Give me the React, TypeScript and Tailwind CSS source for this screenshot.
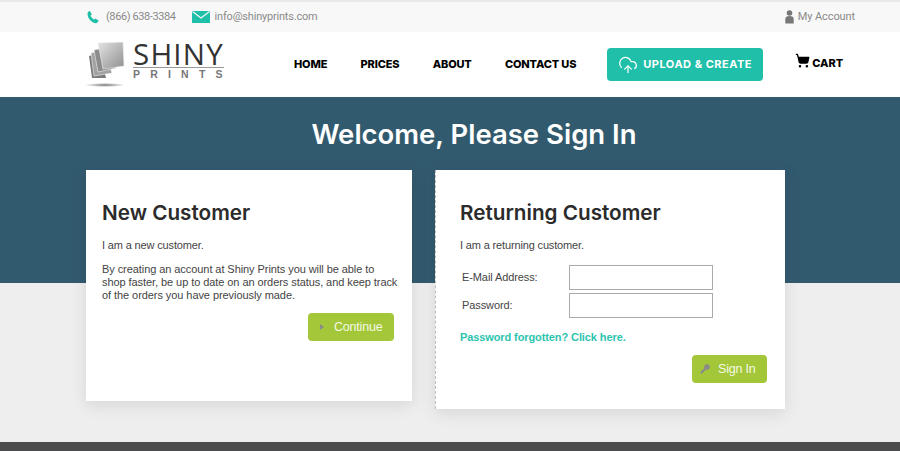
import { CloudUpload, ShoppingCart } from "lucide-react";

const navItems = ["HOME", "PRICES", "ABOUT", "CONTACT US"];

const Logo = () => {
  return (
    <div className="flex w-[138px] items-start">
      <svg width="42" height="46" viewBox="0 0 42 46" className="mt-[10px]">
        <defs>
          <linearGradient id="sheet" x1="0" y1="0" x2="1" y2="1">
            <stop offset="0" stopColor="#e4e4e4" />
            <stop offset="1" stopColor="#8f8f8f" />
          </linearGradient>
          <radialGradient id="shade">
            <stop offset="0" stopColor="#777" />
            <stop offset="1" stopColor="#fff" />
          </radialGradient>
        </defs>
        <polygon points="3,14 14,11 20,36 6,36" fill="#7c7c7c" />
        <polygon points="5,11 18,8 26,31 8,34" fill="#a2a2a2" stroke="#eee" strokeWidth="0.6" />
        <polygon points="8,8 22,5 30,26 12,30" fill="#8c8c8c" stroke="#eee" strokeWidth="0.6" />
        <polygon points="12,1 37,0 38,24 17,27" fill="url(#sheet)" stroke="#eee" strokeWidth="0.6" />
        <ellipse cx="19" cy="43" rx="20" ry="2" fill="url(#shade)" />
      </svg>
      <div className="ml-[5px] mt-[8px] flex w-[91px] flex-col">
        <div className="font-['Open_Sans',sans-serif] text-[29.5px] leading-[27px] tracking-[1.2px] text-[#333333]">
          SHINY
        </div>
        <div className="h-px w-[91px] bg-[#9a9a9a]" />
        <div className="mt-[1px] font-['Liberation_Sans',sans-serif] text-[10.5px] leading-[11px] font-bold tracking-[10.2px] whitespace-nowrap text-[#777777]">
          PRINTS
        </div>
      </div>
    </div>
  );
};

const App = () => {
  return (
    <div className="h-[451px] w-[900px] overflow-hidden bg-[#eeeeee] font-['Liberation_Sans',sans-serif]">
      {/* top bar */}
      <div className="h-[32px] border-t-2 border-[#e9e9e9] bg-[#f8f8f8]">
        <div className="flex h-full items-center pl-[86px] pr-[45px] font-['Roboto',sans-serif] text-[11px] text-[#8a8a8a]">
          <svg width="14" height="14" viewBox="0 0 24 24" fill="#1fbfa9">
            <path d="M6.600 1.500 10 7.200 7.900 9.600c.9 2.800 3.200 5.400 5.900 6.800l2.300-2 5.500 3.600c-.7 2.500-2.400 4.400-4.500 4.500C9.800 22.600 2 13.600 2.700 5.500 2.900 3.600 4.400 2 6.600 1.500Z" />
          </svg>
          <span className="ml-[6px] tracking-[-0.4px]">(866) 638-3384</span>
          <svg width="18" height="12" viewBox="0 0 18 12" className="ml-[16px]">
            <rect width="18" height="12" fill="#1fbfa9" />
            <path d="M0.5 0.5 9 7l8.500-6.500" fill="none" stroke="#f8f8f8" strokeWidth="1.2" />
          </svg>
          <span className="ml-[5px] tracking-[-0.2px]">info@shinyprints.com</span>
          <svg width="9" height="14" viewBox="0 0 9 14" fill="#777777" className="ml-auto">
            <circle cx="4.5" cy="3" r="2.8" />
            <path d="M0.3 13.5V9c0-2 1.500-3 4.200-3s4.200 1 4.200 3v4.500Z" />
          </svg>
          <span className="ml-[4px] tracking-[-0.1px]">My Account</span>
        </div>
      </div>

      {/* header */}
      <div className="flex h-[65px] items-start bg-white pl-[86px]">
        <Logo />
        <nav className="ml-[70px] flex h-full items-center gap-[33.3px] font-['Inter',sans-serif] text-[11px] font-extrabold tracking-[-0.15px] text-black">
          {navItems.map((item) => (
            <span key={item}>{item}</span>
          ))}
        </nav>
        <div className="mt-[16px] ml-[31px] flex h-[33px] w-[156px] items-center rounded-[4px] bg-[#1fbfa9] pl-[11px] text-white">
          <CloudUpload size={20} strokeWidth={1.5} />
          <span className="ml-[5px] font-['Inter',sans-serif] text-[11px] font-bold tracking-[0.5px]">
            UPLOAD &amp; CREATE
          </span>
        </div>
        <div className="mt-[21px] ml-[32px] flex items-start">
          <ShoppingCart size={15} fill="#000" className="text-black" />
          <span className="mt-[4px] ml-[2px] font-['Inter',sans-serif] text-[11px] leading-[13px] font-extrabold text-black">
            CART
          </span>
        </div>
      </div>

      {/* hero */}
      <div className="h-[186px] bg-[#325a6e] pt-[19px] pl-[48px] text-center font-['Inter',sans-serif] text-[27.5px] leading-[36px] font-semibold text-white">
        Welcome, Please Sign In
      </div>

      {/* cards */}
      <div className="mt-[-113px] flex items-start gap-[23px] pl-[86px]">
        <div className="h-[231px] w-[326px] bg-white px-[16px] pt-[30px] text-[11px] leading-[13px] text-[#444444] shadow-[0_4px_16px_rgba(0,0,0,0.1)]">
          <h2 className="font-['Inter',sans-serif] text-[20.7px] leading-[26px] font-semibold text-[#2b2b2b]">
            New Customer
          </h2>
          <p className="mt-[13px] tracking-[-0.15px]">I am a new customer.</p>
          <p className="mt-[11px] w-[296px] tracking-[-0.07px]">
            By creating an account at Shiny Prints you will be able to shop faster, be up to date on an orders status,
            and keep track of the orders you have previously made.
          </p>
          <div className="mt-[11px] flex justify-end pr-[2px]">
            <div className="flex h-[28px] w-[86px] items-center rounded-[4px] bg-[#a3c739] pl-[12px] text-[#f4f9e4]">
              <span className="h-0 w-0 border-y-[3px] border-l-[4px] border-y-transparent border-l-[#8a8a8a]" />
              <span className="ml-[10px] text-[12.5px] tracking-[-0.2px]">Continue</span>
            </div>
          </div>
        </div>

        <div className="h-[239px] w-[350px] border-l border-dashed border-[#bbbbbb] bg-white pt-[30px] pr-[18px] pl-[24px] text-[11px] leading-[13px] text-[#444444] shadow-[0_4px_16px_rgba(0,0,0,0.1)]">
          <h2 className="font-['Inter',sans-serif] text-[20.7px] leading-[26px] font-semibold text-[#2b2b2b]">
            Returning Customer
          </h2>
          <p className="mt-[13px] tracking-[-0.15px]">I am a returning customer.</p>
          <div className="mt-[13px] flex items-center pl-[2px] tracking-[-0.1px]">
            <span className="w-[107px]">E-Mail Address:</span>
            <input className="h-[25px] w-[144px] border border-[#aaaaaa] bg-white" />
          </div>
          <div className="mt-[3px] flex items-center pl-[2px] tracking-[-0.1px]">
            <span className="w-[107px]">Password:</span>
            <input className="h-[25px] w-[144px] border border-[#aaaaaa] bg-white" />
          </div>
          <p className="mt-[13px] font-bold tracking-[-0.1px] text-[#2cc4ae]">Password forgotten? Click here.</p>
          <div className="mt-[11px] flex justify-end">
            <div className="flex h-[28px] w-[75px] items-center rounded-[4px] bg-[#a3c739] pl-[8px] text-[#f4f9e4]">
              <svg width="10" height="10" viewBox="0 0 10 10" fill="#8a8a8a">
                <circle cx="7" cy="3" r="2.8" />
                <path d="M5.500 3 0.500 8v1.500H2L7 4.500Z" />
              </svg>
              <span className="ml-[8px] text-[12.5px] tracking-[-0.2px]">Sign In</span>
            </div>
          </div>
        </div>
      </div>

      {/* footer */}
      <div className="mt-[33px] h-[20px] bg-[#4a4c4d]" />
    </div>
  );
};

export default App;
